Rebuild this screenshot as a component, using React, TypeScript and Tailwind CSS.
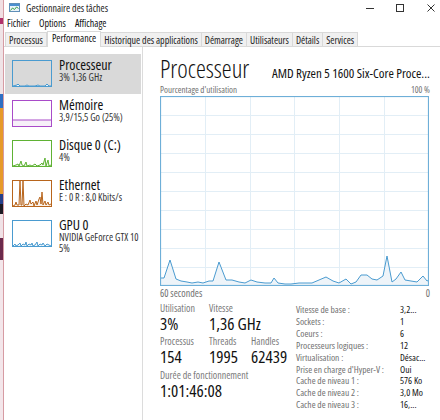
import React from "react"

type Perf = {
  name: string
  lines: string[]
  stroke: string
  fill: string
  points: string
}

const items: Perf[] = [
  {
    name: "Processeur",
    lines: ["3% 1,36 GHz"],
    stroke: "#4a9bd0",
    fill: "#eef5fa",
    points: "0,26 4,25 5,24 7,26 12,26 14,25 16,26 22,26 25,25 27,26 32,26 34,24 36,26 38,26",
  },
  {
    name: "Mémoire",
    lines: ["3,9/15,5 Go (25%)"],
    stroke: "#a94bc9",
    fill: "#f6f0f8",
    points: "0,20 38,20",
  },
  {
    name: "Disque 0 (C:)",
    lines: ["4%"],
    stroke: "#5fb234",
    fill: "#eef7ea",
    points: "0,26 3,25 5,24 6,26 8,21 9,25 11,26 13,22 14,26 17,25 19,26 22,24 24,26 27,25 29,23 30,25 32,18 33,26 35,20 36,26 38,25",
  },
  {
    name: "Ethernet",
    lines: ["E : 0 R : 8,0 Kbits/s"],
    stroke: "#b8651c",
    fill: "#faf1e9",
    points: "0,26 2,25 3,22 4,25 6,25 7,1 8,25 9,25 10,1 11,26 13,24 15,25 17,20 18,24 20,22 21,26 23,21 24,25 26,19 27,17 28,24 29,12 30,25 32,21 33,25 35,22 36,25 38,24",
  },
  {
    name: "GPU 0",
    lines: ["NVIDIA GeForce GTX 10", "5%"],
    stroke: "#4a9bd0",
    fill: "#eef5fa",
    points: "0,26 2,24 3,26 5,25 7,23 8,26 10,24 12,25 13,22 14,26 16,24 18,25 19,23 20,26 22,25 24,22 25,26 27,24 29,25 30,23 32,26 34,24 36,25 38,26",
  },
]

const cpuLine =
  "0,182 4,182 10,164 16,183 21,185 27,186 32,187 38,186 43,187 49,185 53,185 59,166 66,184 72,184 79,186 85,187 91,184 97,186 105,187 111,187 114,182 118,187 125,188 131,188 139,187 146,187 152,187 159,184 166,181 173,185 179,187 186,183 191,188 196,186 201,179 207,179 212,183 217,184 223,180 227,160 232,186 236,183 241,176 245,184 251,185 257,186 263,180 267,185 269,184"

const specs = [
  ["Vitesse de base :", "3,2..."],
  ["Sockets :", "1"],
  ["Coeurs :", "6"],
  ["Processeurs logiques :", "12"],
  ["Virtualisation :", "Désac..."],
  ["Prise en charge d'Hyper-V :", "Oui"],
  ["Cache de niveau 1 :", "576 Ko"],
  ["Cache de niveau 2 :", "3,0 Mo"],
  ["Cache de niveau 3 :", "16,..."],
]

const tabs = ["Processus", "Performance", "Historique des applications", "Démarrage", "Utilisateurs", "Détails", "Services"]

function shift(points: string) {
  return points
    .split(" ")
    .map((pt) => {
      const [x, y] = pt.split(",")
      return `${Number(x) + 1},${y}`
    })
    .join(" ")
}

function Thumb({ p }: { p: Perf }) {
  const pts = shift(p.points)
  return (
    <svg width="40" height="27" viewBox="0 0 40 27" className="shrink-0">
      <polygon points={`1,26 ${pts} 39,26`} fill={p.fill} />
      <polyline points={pts} fill="none" stroke={p.stroke} strokeWidth="1" />
      <rect x="0.5" y="0.5" width="39" height="26" fill="none" stroke={p.stroke} strokeWidth="1" />
    </svg>
  )
}

function Stat({ label, value, w }: { label: string; value: string; w: string }) {
  return (
    <div className={`${w} flex flex-col whitespace-nowrap`}>
      <span className="text-[10px] leading-[13px] text-[#7a7a7a]">{label}</span>
      <span className="text-[17px] leading-[18px] text-[#111]">{value}</span>
    </div>
  )
}

export default function App() {
  return (
    <div className="w-[440px] h-[420px] flex bg-white overflow-hidden text-black font-['Open_Sans',sans-serif] font-stretch-condensed">
      {/* desktop behind the window */}
      <div className="w-[3px] flex flex-col shrink-0">
        <div className="h-[18px] bg-[#f1dfe3]" />
        <div className="h-[6px] bg-[#b0306a]" />
        <div className="h-[70px] bg-[#efe3e6]" />
        <div className="h-[14px] bg-[#2f6fc4]" />
        <div className="h-[86px] bg-[#e79a2a]" />
        <div className="h-[10px] bg-[#26408a]" />
        <div className="h-[10px] bg-[#1c1a22]" />
        <div className="h-[24px] bg-[#f0e2e6]" />
        <div className="h-[22px] bg-[#6b2a4c]" />
        <div className="flex-1 bg-[#f3e6ea]" />
      </div>
      <div className="w-px bg-[#d69ba3] shrink-0" />

      <div className="flex-1 flex flex-col min-w-0">
        {/* title bar */}
        <div className="h-[15px] flex items-center text-[10px] leading-none">
          <svg width="11" height="9" viewBox="0 0 11 9" className="ml-[5px] mr-[6px]">
            <rect x="0.5" y="0.5" width="10" height="8" fill="#e8f2fa" stroke="#5f8fb8" />
            <rect x="1" y="1" width="9" height="2" fill="#4a8fd0" />
            <polyline points="1.5,7.5 3.5,5 5.5,6.5 7.5,4 9.5,5.5" fill="none" stroke="#3aa046" strokeWidth="1" />
          </svg>
          <span className="text-[#222]">Gestionnaire des tâches</span>
          <div className="ml-auto flex items-center">
            <svg width="10" height="10" viewBox="0 0 10 10" className="mr-[20px]">
              <line x1="1" y1="5.5" x2="9" y2="5.5" stroke="#333" strokeWidth="1" />
            </svg>
            <svg width="10" height="10" viewBox="0 0 10 10" className="mr-[21px]">
              <rect x="1.5" y="1.5" width="7" height="7" fill="none" stroke="#333" strokeWidth="1" />
            </svg>
            <svg width="10" height="10" viewBox="0 0 10 10" className="mr-[4px]">
              <path d="M1.5 1.5 L8.5 8.5 M8.5 1.5 L1.5 8.5" stroke="#333" strokeWidth="1" />
            </svg>
          </div>
        </div>

        {/* menu */}
        <div className="h-[16px] flex items-center gap-[9px] pl-[3px] text-[10px] leading-none text-[#111]">
          <span>Fichier</span>
          <span>Options</span>
          <span>Affichage</span>
        </div>

        {/* tabs */}
        <div className="h-[16px] flex items-end pl-px border-b border-[#d9d9d9] text-[10px] leading-none">
          {tabs.map((t) =>
            t === "Performance" ? (
              <div key={t} className="h-[16px] px-[4px] flex items-center bg-white border border-b-0 border-[#d9d9d9] -mb-px pb-[3px] text-[#111]">
                {t}
              </div>
            ) : (
              <div key={t} className="h-[14px] px-[3px] flex items-center bg-[#f0f0f0] border border-b-0 border-l-0 first:border-l border-[#d9d9d9] text-[#222]">
                {t}
              </div>
            )
          )}
        </div>

        {/* body */}
        <div className="flex-1 flex min-h-0">
          {/* sidebar */}
          <div className="w-[139px] shrink-0 border-r border-[#dcdcdc] pt-[7px] px-px flex flex-col">
            {items.map((p, i) => (
              <div key={p.name} className={`h-[40px] flex pl-[7px] pt-[6px] gap-[7px] ${i === 0 ? "bg-[#d9d9d9]" : ""}`}>
                <Thumb p={p} />
                <div className="flex flex-col -mt-[3px] min-w-0">
                  <span className="text-[14px] leading-[15px] text-[#111] whitespace-nowrap">{p.name}</span>
                  {p.lines.map((l) => (
                    <span key={l} className="text-[10px] leading-[11px] text-[#333] whitespace-nowrap">{l}</span>
                  ))}
                </div>
              </div>
            ))}
          </div>

          {/* main panel */}
          <div className="flex-1 min-w-0 pl-[17px] pr-[10px] pt-[7px] flex flex-col">
            <div className="flex items-baseline h-[28px] whitespace-nowrap">
              <span className="text-[25px] leading-[28px] font-light text-[#111]">Processeur</span>
              <span className="ml-auto text-[13px] text-[#111]">AMD Ryzen 5 1600 Six-Core Proce...</span>
            </div>
            <div className="flex justify-between text-[9px] leading-[12px] text-[#707070] mt-[2px]">
              <span>Pourcentage d'utilisation</span>
              <span>100 %</span>
            </div>
            <svg width="269" height="190" viewBox="0 0 269 190" className="shrink-0">
              {[45, 90, 134, 179, 224].map((x) => (
                <line key={x} x1={x + 0.5} y1="0" x2={x + 0.5} y2="190" stroke="#e2eef6" strokeWidth="1" />
              ))}
              {[19, 38, 57, 76, 95, 114, 133, 152, 171].map((y) => (
                <line key={y} x1="0" y1={y + 0.5} x2="269" y2={y + 0.5} stroke="#e2eef6" strokeWidth="1" />
              ))}
              <polygon points={`0,190 ${cpuLine} 269,190`} fill="#eef4f9" />
              <polyline points={cpuLine} fill="none" stroke="#4a9bd0" strokeWidth="1" />
              <rect x="0.5" y="0.5" width="268" height="189" fill="none" stroke="#6eafd8" strokeWidth="1.2" />
            </svg>
            <div className="flex justify-between text-[10px] leading-[13px] text-[#707070] mt-px">
              <span>60 secondes</span>
              <span>0</span>
            </div>

            <div className="flex mt-[2px]">
              <div className="w-[136px] flex flex-col gap-[2px]">
                <div className="flex">
                  <Stat label="Utilisation" value="3%" w="w-[49px]" />
                  <Stat label="Vitesse" value="1,36 GHz" w="w-[42px]" />
                </div>
                <div className="flex">
                  <Stat label="Processus" value="154" w="w-[49px]" />
                  <Stat label="Threads" value="1995" w="w-[42px]" />
                  <Stat label="Handles" value="62439" w="w-[40px]" />
                </div>
                <div className="mt-px">
                  <Stat label="Durée de fonctionnement" value="1:01:46:08" w="w-[130px]" />
                </div>
              </div>
              <div className="flex-1 flex flex-col text-[9.5px] leading-[11.9px] mt-[2px]">
                {specs.map(([k, v]) => (
                  <div key={k} className="flex whitespace-nowrap">
                    <span className="w-[104px] text-[#707070]">{k}</span>
                    <span className="text-[#111]">{v}</span>
                  </div>
                ))}
              </div>
            </div>
          </div>
        </div>
      </div>
    </div>
  )
}
